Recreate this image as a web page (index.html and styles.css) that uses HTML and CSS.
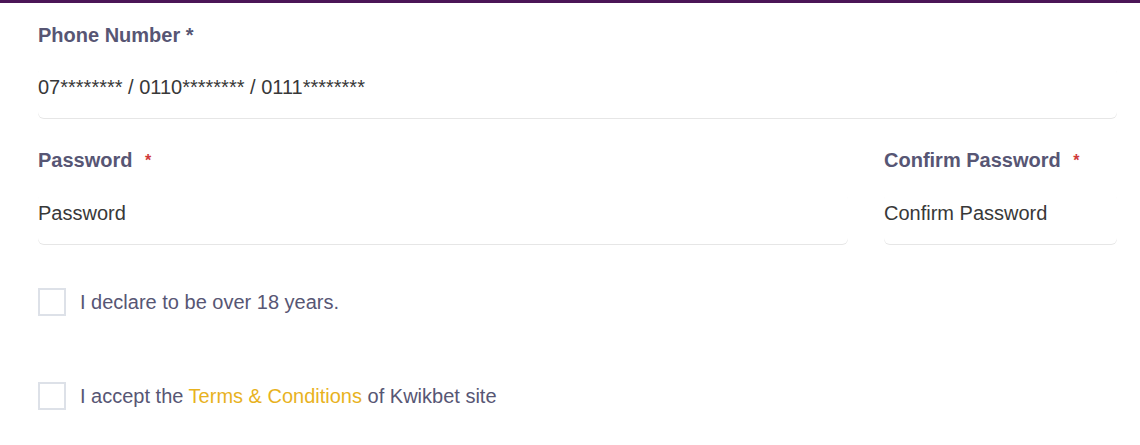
FILE: index.html
```html
<!DOCTYPE html>
<html lang="en">
<head>
    <meta charset="UTF-8">
    <title>Register</title>
<link rel="stylesheet" href="styles.css">
</head>
<body>
<div class="topbar"></div>
<form class="form">
    <div class="field">
        <label class="label">Phone Number *</label>
        <input class="input" type="text" placeholder="07******** / 0110******** / 0111********">
    </div>

    <div class="row">
        <div class="field">
            <label class="label">Password <span class="req">*</span></label>
            <input class="input" type="password" placeholder="Password">
        </div>
        <div class="field">
            <label class="label">Confirm Password <span class="req">*</span></label>
            <input class="input" type="password" placeholder="Confirm Password">
        </div>
    </div>

    <label class="check">
        <span class="box"></span>
        <span>I declare to be over 18 years.</span>
    </label>

    <label class="check check-last">
        <span class="box"></span>
        <span>I accept the <a class="link" href="#">Terms &amp; Conditions</a> of Kwikbet site</span>
    </label>
</form>
</body>
</html>
```

FILE: styles.css
```css
body{
    margin: 0;
    background: #fff;
    font-family: "Liberation Sans", Arial, sans-serif;
}

.topbar{
    height: 3px;
    background: #4b1657;
}

.form{
    padding: 20px 23px 0 38px;
}

.field{
    margin-bottom: 30px;
}

.row .field{
    margin-bottom: 0;
}

.label{
    display: block;
    font-size: 20px;
    font-weight: 700;
    line-height: 24px;
    color: #575674;
}

.req{
    color: #d03a3a;
    font-size: 16px;
    margin-left: 7px;
    vertical-align: 1px;
}

.input{
    display: block;
    width: 100%;
    box-sizing: border-box;
    height: 51px;
    margin-top: 20px;
    padding: 0 0 11px 0;
    border: none;
    border-radius: 6px;
    box-shadow: 0 1px 0 #e6e6e6;
    outline: none;
    font-family: inherit;
    font-size: 20px;
    color: #333;
    background: #fff;
}

.input::placeholder{
    color: #383838;
    opacity: 1;
}

.row{
    display: grid;
    grid-template-columns: 1fr 233px;
    column-gap: 36px;
}

.check{
    display: flex;
    align-items: center;
    gap: 14px;
    margin-top: 44px;
    font-size: 20px;
    line-height: 28px;
    color: #575674;
}

.check-last{
    margin-top: 66px;
}

.box{
    width: 28px;
    height: 28px;
    box-sizing: border-box;
    border: 2px solid #dde1e8;
    background: #fff;
}

.link{
    color: #e8b21e;
    text-decoration: none;
}
```
